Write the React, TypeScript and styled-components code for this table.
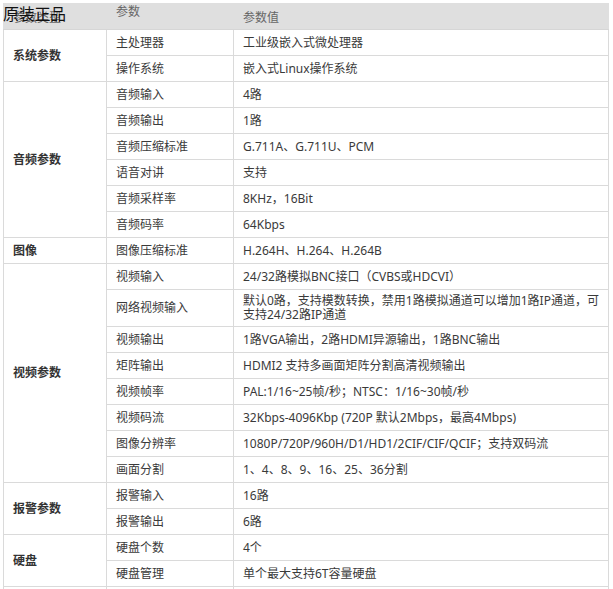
import React from "react";
import styled, { createGlobalStyle } from "styled-components";

const Global = createGlobalStyle`
  html, body {
    margin: 0;
    padding: 0;
    background: #ffffff;
    overflow: hidden;
  }
  body {
    font-family: "Noto Sans", "Noto Sans CJK SC", sans-serif;
  }
`;

const Page = styled.div`
  position: relative;
  padding: 3px 0 0 3px;
  width: 613px;
  height: 589px;
  box-sizing: border-box;
  overflow: hidden;
`;

const Stamp = styled.div`
  position: absolute;
  left: 3px;
  top: 3px;
  font-family: "Noto Sans CJK SC", sans-serif;
  font-size: 16px;
  line-height: 20px;
  color: #111;
  letter-spacing: -0.3px;
`;

const Table = styled.table`
  width: 605px;
  table-layout: fixed;
  border-collapse: collapse;
  font-family: "Noto Sans", "Noto Sans CJK SC", sans-serif;
  font-size: 12px;
  color: #3a3a3a;
`;

const HeadCell = styled.th<{ $align?: "top" | "middle" }>`
  height: 26px;
  padding: ${(p) => (p.$align === "top" ? "1px 6px 0 9px" : "2px 6px 0 9px")};
  background: #dfdfdf;
  border: 1px solid #dfdfdf;
  border-bottom-color: #d6d6d6;
  color: #666;
  font-weight: 400;
  font-size: 12px;
  line-height: 14px;
  text-align: left;
  vertical-align: ${(p) => p.$align ?? "middle"};
  box-sizing: border-box;
`;

const GroupCell = styled.td`
  padding: 4px 6px 4px 9px;
  border: 1px solid #dadada;
  font-weight: 700;
  color: #333;
  line-height: 14px;
  vertical-align: middle;
`;

const Cell = styled.td`
  height: 26px;
  padding: 4px 6px 4px 9px;
  border: 1px solid #dadada;
  line-height: 14px;
  vertical-align: middle;
  box-sizing: border-box;
  word-break: break-all;
`;

type Group = { name: string; rows: [string, string][] };

const groups: Group[] = [
  {
    name: "系统参数",
    rows: [
      ["主处理器", "工业级嵌入式微处理器"],
      ["操作系统", "嵌入式Linux操作系统"],
    ],
  },
  {
    name: "音频参数",
    rows: [
      ["音频输入", "4路"],
      ["音频输出", "1路"],
      ["音频压缩标准", "G.711A、G.711U、PCM"],
      ["语音对讲", "支持"],
      ["音频采样率", "8KHz，16Bit"],
      ["音频码率", "64Kbps"],
    ],
  },
  {
    name: "图像",
    rows: [["图像压缩标准", "H.264H、H.264、H.264B"]],
  },
  {
    name: "视频参数",
    rows: [
      ["视频输入", "24/32路模拟BNC接口（CVBS或HDCVI）"],
      [
        "网络视频输入",
        "默认0路，支持模数转换，禁用1路模拟通道可以增加1路IP通道，可支持24/32路IP通道",
      ],
      ["视频输出", "1路VGA输出，2路HDMI异源输出，1路BNC输出"],
      ["矩阵输出", "HDMI2 支持多画面矩阵分割高清视频输出"],
      ["视频帧率", "PAL:1/16~25帧/秒；NTSC：1/16~30帧/秒"],
      ["视频码流", "32Kbps-4096Kbp (720P 默认2Mbps，最高4Mbps)"],
      ["图像分辨率", "1080P/720P/960H/D1/HD1/2CIF/CIF/QCIF；支持双码流"],
      ["画面分割", "1、4、8、9、16、25、36分割"],
    ],
  },
  {
    name: "报警参数",
    rows: [
      ["报警输入", "16路"],
      ["报警输出", "6路"],
    ],
  },
  {
    name: "硬盘",
    rows: [
      ["硬盘个数", "4个"],
      ["硬盘管理", "单个最大支持6T容量硬盘"],
    ],
  },
  {
    name: "网络",
    rows: [["网络接口", "1个RJ45 10M/100M/1000M自适应以太网口"]],
  },
];

export default function App() {
  return (
    <>
      <Global />
      <Page>
        <Table>
          <colgroup>
            <col style={{ width: 103 }} />
            <col style={{ width: 127 }} />
            <col style={{ width: 375 }} />
          </colgroup>
          <thead>
            <tr>
              <HeadCell>参数类型</HeadCell>
              <HeadCell $align="top">参数</HeadCell>
              <HeadCell>参数值</HeadCell>
            </tr>
          </thead>
          <tbody>
            {groups.map((g) =>
              g.rows.map(([k, v], i) => (
                <tr key={g.name + k}>
                  {i === 0 && (
                    <GroupCell rowSpan={g.rows.length}>{g.name}</GroupCell>
                  )}
                  <Cell>{k}</Cell>
                  <Cell>{v}</Cell>
                </tr>
              ))
            )}
          </tbody>
        </Table>
        <Stamp>原装正品</Stamp>
      </Page>
    </>
  );
}
